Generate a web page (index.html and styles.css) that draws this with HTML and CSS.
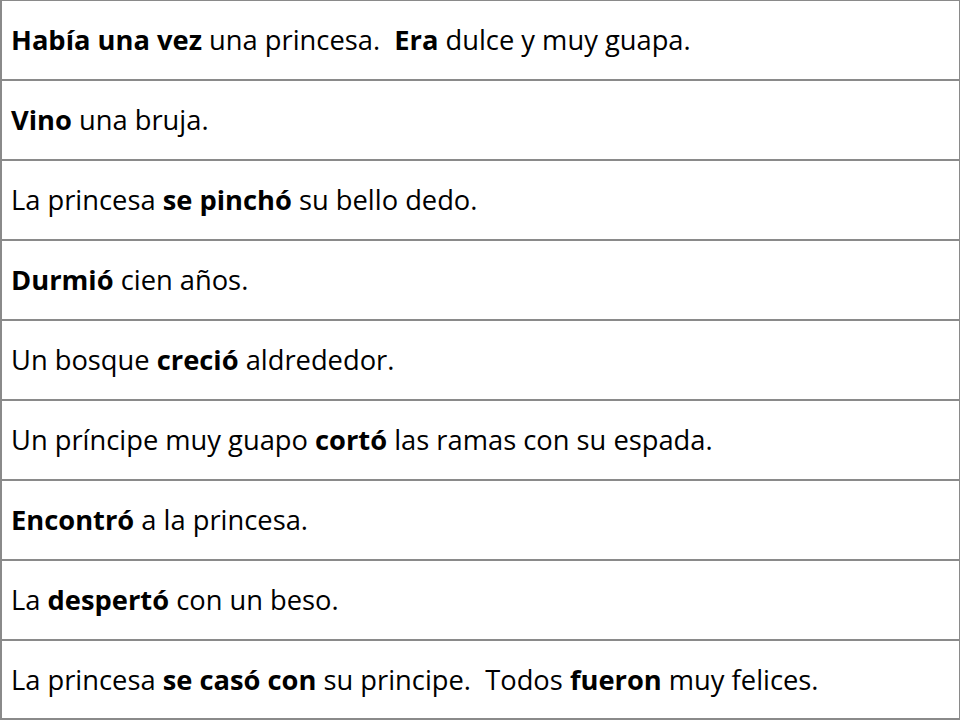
FILE: index.html
```html
<!DOCTYPE html>
<html lang="es">
<head>
<meta charset="utf-8">
<title>La princesa</title>
<link rel="stylesheet" href="styles.css">
</head>
<body>
<div class="story">
  <div class="row"><p><b>Había una vez</b> una princesa.&nbsp; <b>Era</b> dulce y muy guapa.</p></div>
  <div class="row"><p><b>Vino</b> una bruja.</p></div>
  <div class="row"><p>La princesa <b>se pinchó</b> su bello dedo.</p></div>
  <div class="row"><p><b>Durmió</b> cien años.</p></div>
  <div class="row"><p>Un bosque <b>creció</b> aldrededor.</p></div>
  <div class="row"><p>Un príncipe muy guapo <b>cortó</b> las ramas con su espada.</p></div>
  <div class="row"><p><b>Encontró</b> a la princesa.</p></div>
  <div class="row"><p>La <b>despertó</b> con un beso.</p></div>
  <div class="row last"><p>La princesa <b>se casó con</b> su principe.&nbsp; Todos <b>fueron</b> muy felices.</p></div>
</div>
</body>
</html>
```

FILE: styles.css
```css
html, body {
  margin: 0;
  padding: 0;
  background: #ffffff;
}

.story {
  width: 957px;
  border-left: 2px solid #8a8a8a;
  border-right: 2px solid #8a8a8a;
  border-top: 1px solid #8a8a8a;
  font-family: "Open Sans", "Lato", sans-serif;
  font-size: 27.3px;
  color: #000000;
}

.row {
  height: 78px;
  border-bottom: 2px solid #8a8a8a;
  display: flex;
  align-items: center;
  padding-left: 9px;
}

.row.last {
  height: 77px;
}

.row p {
  margin: 0;
  line-height: 1;
}

.row b {
  font-weight: 700;
}
```
